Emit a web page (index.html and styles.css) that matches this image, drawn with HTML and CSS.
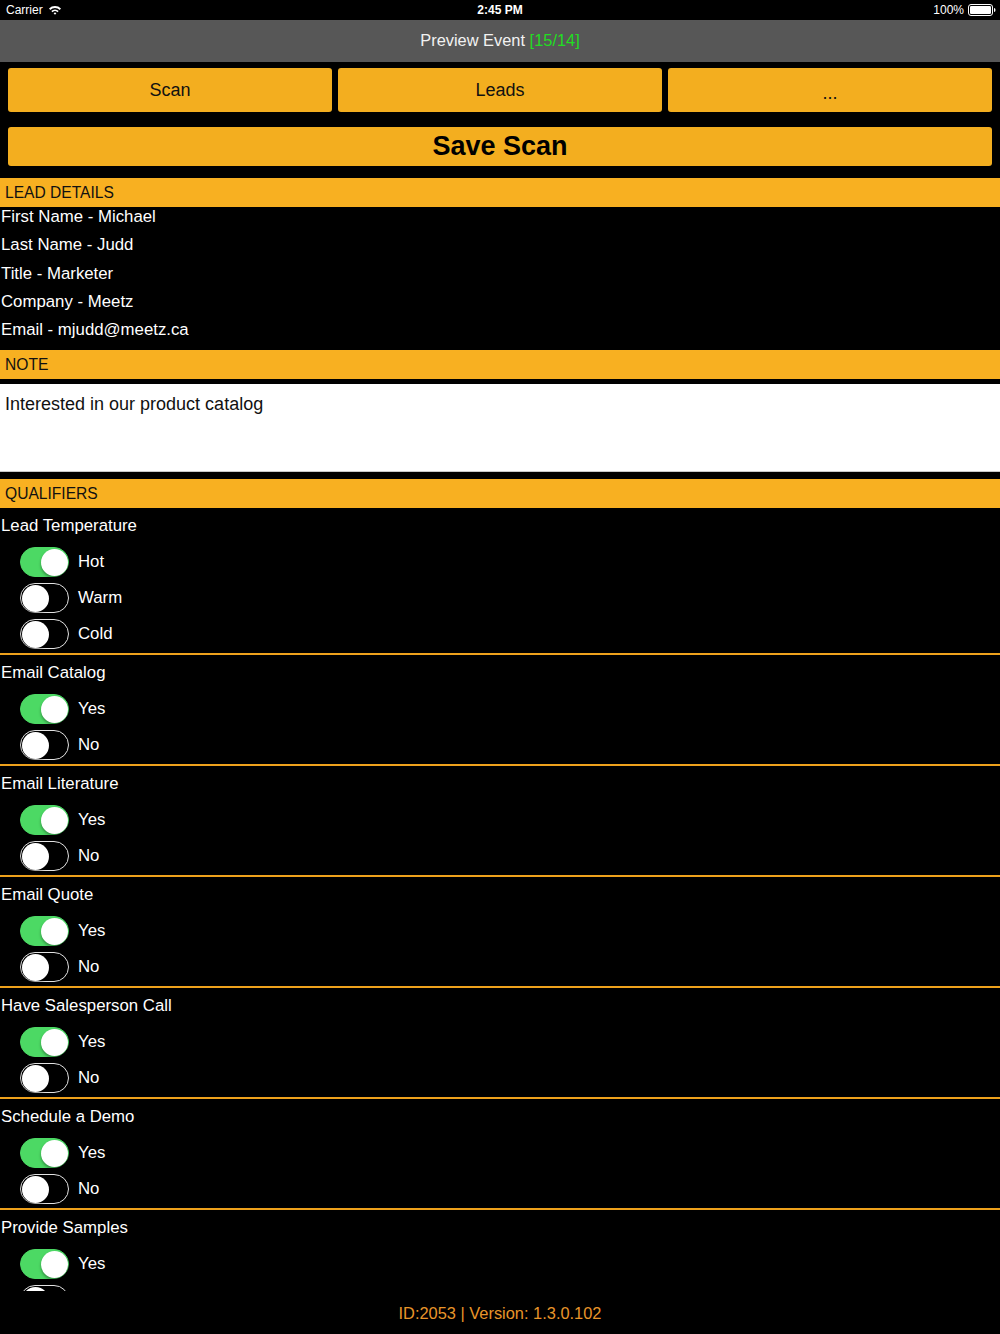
FILE: index.html
```html
<!DOCTYPE html>
<html>
<head>
<meta charset="utf-8">
<link rel="stylesheet" href="styles.css">
</head>
<body>
<div class="status">
  <div class="st-left">Carrier
    <svg class="wifi" width="14" height="11" viewBox="0 0 14 11"><path d="M1 3.6 A8.5 8.5 0 0 1 13 3.6 L11.7 4.9 A6.7 6.7 0 0 0 2.3 4.9 Z" fill="#fff"/><path d="M3.3 5.9 A5.3 5.3 0 0 1 10.7 5.9 L9.4 7.2 A3.5 3.5 0 0 0 4.6 7.2 Z" fill="#fff"/><path d="M5.6 8.2 A2.2 2.2 0 0 1 8.4 8.2 L7 9.8 Z" fill="#fff"/></svg>
  </div>
  <div class="st-time">2:45 PM</div>
  <div class="st-right">100%
    <svg class="battery" width="28" height="12" viewBox="0 0 28 12"><rect x="0.5" y="0.5" width="24" height="11" rx="2.5" fill="none" stroke="#fff" stroke-width="1"/><rect x="2" y="2" width="21" height="8" rx="1.2" fill="#fff"/><path d="M26 4 Q27.5 4 27.5 6 Q27.5 8 26 8 Z" fill="#fff"/></svg>
  </div>
</div>
<div class="navbar">Preview Event <span class="count">[15/14]</span></div>
<div class="actions">
  <div class="btn-row">
    <div class="btn">Scan</div>
    <div class="btn">Leads</div>
    <div class="btn btn-more">...</div>
  </div>
  <div class="btn save">Save Scan</div>
</div>
<div class="section-h">LEAD DETAILS</div>
<div class="details">
  <div class="row">First Name - Michael</div>
  <div class="row">Last Name - Judd</div>
  <div class="row">Title - Marketer</div>
  <div class="row">Company - Meetz</div>
  <div class="row">Email - mjudd@meetz.ca</div>
</div>
<div class="section-h">NOTE</div>
<div class="note">Interested in our product catalog</div>
<div class="section-h">QUALIFIERS</div>
<div class="qual-list">
  <div class="group">
    <div class="g-label">Lead Temperature</div>
    <div class="opt"><span class="toggle on"><span class="thumb"></span></span><span class="opt-label">Hot</span></div>
    <div class="opt"><span class="toggle"><span class="thumb"></span></span><span class="opt-label">Warm</span></div>
    <div class="opt"><span class="toggle"><span class="thumb"></span></span><span class="opt-label">Cold</span></div>
  </div>
  <div class="group">
    <div class="g-label">Email Catalog</div>
    <div class="opt"><span class="toggle on"><span class="thumb"></span></span><span class="opt-label">Yes</span></div>
    <div class="opt"><span class="toggle"><span class="thumb"></span></span><span class="opt-label">No</span></div>
  </div>
  <div class="group">
    <div class="g-label">Email Literature</div>
    <div class="opt"><span class="toggle on"><span class="thumb"></span></span><span class="opt-label">Yes</span></div>
    <div class="opt"><span class="toggle"><span class="thumb"></span></span><span class="opt-label">No</span></div>
  </div>
  <div class="group">
    <div class="g-label">Email Quote</div>
    <div class="opt"><span class="toggle on"><span class="thumb"></span></span><span class="opt-label">Yes</span></div>
    <div class="opt"><span class="toggle"><span class="thumb"></span></span><span class="opt-label">No</span></div>
  </div>
  <div class="group">
    <div class="g-label">Have Salesperson Call</div>
    <div class="opt"><span class="toggle on"><span class="thumb"></span></span><span class="opt-label">Yes</span></div>
    <div class="opt"><span class="toggle"><span class="thumb"></span></span><span class="opt-label">No</span></div>
  </div>
  <div class="group">
    <div class="g-label">Schedule a Demo</div>
    <div class="opt"><span class="toggle on"><span class="thumb"></span></span><span class="opt-label">Yes</span></div>
    <div class="opt"><span class="toggle"><span class="thumb"></span></span><span class="opt-label">No</span></div>
  </div>
  <div class="group">
    <div class="g-label">Provide Samples</div>
    <div class="opt"><span class="toggle on"><span class="thumb"></span></span><span class="opt-label">Yes</span></div>
    <div class="opt"><span class="toggle"><span class="thumb"></span></span><span class="opt-label">No</span></div>
  </div>
</div>
<div class="footer">ID:2053 | Version: 1.3.0.102</div>
</body>
</html>
```
FILE: styles.css
```css
* { box-sizing: border-box; }
html, body {
  margin: 0;
  padding: 0;
  background: #000;
  color: #fff;
  font-family: "Liberation Sans", Arial, sans-serif;
  font-size: 16px;
}
body {
  width: 1000px;
  height: 1334px;
  overflow: hidden;
  display: flex;
  flex-direction: column;
}
.status {
  height: 20px;
  flex: none;
  display: flex;
  align-items: center;
  justify-content: space-between;
  padding: 0 4px 0 6px;
  font-size: 12px;
  position: relative;
}
.st-left, .st-right {
  display: flex;
  align-items: center;
  gap: 5px;
}
.st-time {
  font-weight: bold;
  position: absolute;
  left: 0;
  right: 0;
  text-align: center;
  pointer-events: none;
}
.st-right { gap: 4px; }
.navbar {
  height: 42px;
  flex: none;
  background: #575757;
  text-align: center;
  line-height: 40px;
  font-size: 16.4px;
  color: #f2f2f2;
}
.count { color: #22dd22; }
.actions {
  flex: none;
  padding: 6px 8px 12px;
  display: flex;
  flex-direction: column;
  gap: 15px;
}
.btn-row {
  display: flex;
  gap: 6px;
}
.btn {
  flex: 1;
  height: 44px;
  background: #f3ae1f;
  color: #111;
  border-radius: 3px;
  display: flex;
  align-items: center;
  justify-content: center;
  font-size: 18px;
}
.btn-more { padding-top: 6px; }
.save {
  height: 39px;
  flex: none;
  font-size: 27px;
  font-weight: bold;
  color: #000;
}
.section-h {
  flex: none;
  height: 29px;
  line-height: 30px;
  background: #f8b021;
  color: #111;
  padding-left: 5px;
  font-size: 15.6px;
}
.details {
  flex: none;
  display: flex;
  flex-direction: column;
  gap: 8.3px;
  padding: 0 0 10px 1px;
  font-size: 16.8px;
}
.row {
  line-height: 20px;
  height: 20px;
}
.note {
  flex: none;
  margin: 5px 0 7px;
  height: 88px;
  background: #fff;
  color: #111;
  padding: 10px 5px 0;
  line-height: 20px;
  font-size: 18px;
  border-bottom: 1px solid #c8c8c8;
}
.qual-list {
  flex: none;
  height: 783px;
  overflow: hidden;
  font-size: 16.8px;
}
.group {
  padding-bottom: 1px;
  border-bottom: 2px solid #eea11c;
}
.g-label {
  height: 36px;
  line-height: 36px;
  padding-left: 1px;
}
.opt {
  height: 36px;
  display: flex;
  align-items: center;
  padding-left: 20px;
  gap: 9px;
}
.toggle {
  width: 49px;
  height: 30px;
  border-radius: 15px;
  border: 1.5px solid #e2e2e2;
  background: #000;
  display: flex;
  align-items: center;
  justify-content: flex-start;
  padding: 0 0.5px;
  flex: none;
}
.toggle.on {
  background: #4cd964;
  border-color: #4cd964;
  justify-content: flex-end;
}
.thumb {
  width: 27px;
  height: 27px;
  border-radius: 50%;
  background: #fff;
  box-shadow: 0 2px 3px rgba(0, 0, 0, 0.35);
}
.opt-label { line-height: 20px; }
.footer {
  flex: none;
  height: 44px;
  line-height: 44px;
  text-align: center;
  color: #e8952a;
  font-size: 16.4px;
}
```
